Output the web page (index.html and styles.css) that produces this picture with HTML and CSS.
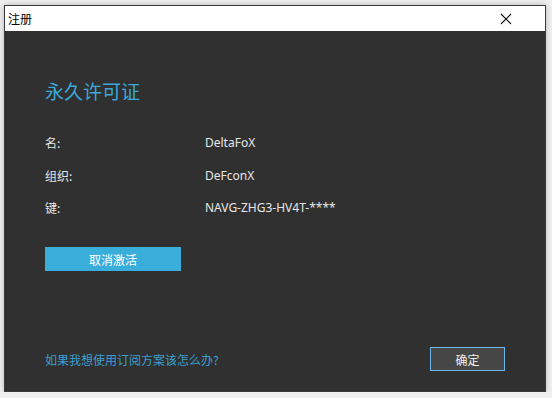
FILE: index.html
```html
<!DOCTYPE html>
<html lang="zh-CN">
<head>
  <meta charset="UTF-8">
  <title>注册</title>
  <link rel="stylesheet" href="styles.css">
</head>
<body>
  <div class="window">
    <div class="titlebar">
      <span class="title">注册</span>
      <button class="close" aria-label="关闭">
        <svg width="12" height="12" viewBox="0 0 12 12"><path d="M1 1L11 11M11 1L1 11" stroke="#111" stroke-width="1.1" fill="none"/></svg>
      </button>
    </div>
    <div class="content">
      <h1 class="heading">永久许可证</h1>
      <div class="info">
        <span class="label">名:</span><span class="value">DeltaFoX</span>
        <span class="label">组织:</span><span class="value">DeFconX</span>
        <span class="label">键:</span><span class="value">NAVG-ZHG3-HV4T-****</span>
      </div>
      <button class="deactivate">取消激活</button>
      <div class="footer">
        <a class="help" href="#">如果我想使用订阅方案该怎么办?</a>
        <button class="ok">确定</button>
      </div>
    </div>
  </div>
</body>
</html>
```

FILE: styles.css
```css
body {
  margin: 0;
  background-color: #f0f0f0;
  font-family: "Segoe UI", "Noto Sans", "Noto Sans CJK SC", sans-serif;
  font-size: 12px;
}

.window {
  width: 540px;
  height: 385px;
  margin: 5px 0 0 4px;
  border: 1px solid #3a3a3a;
  background-color: #303030;
  box-shadow: 0 0 6px rgba(0, 0, 0, 0.25);
  display: flex;
  flex-direction: column;
}

.titlebar {
  height: 25px;
  background-color: #fff;
  display: flex;
  align-items: center;
  justify-content: space-between;
}

.title {
  padding-left: 3px;
  color: #000;
  font-family: "Noto Sans CJK SC", sans-serif;
  font-size: 12px;
}

.close {
  width: 40px;
  height: 25px;
  margin-right: 19px;
  border: none;
  background: none;
  padding: 0;
  display: flex;
  align-items: center;
  justify-content: center;
}

.content {
  flex: 1;
  padding: 0 40px 20px 40px;
  display: flex;
  flex-direction: column;
}

.heading {
  margin: 47px 0 0 0;
  color: #3ba7d9;
  font-family: "Noto Sans CJK SC", sans-serif;
  font-weight: 400;
  font-size: 19px;
  line-height: 26px;
}

.info {
  margin-top: 30px;
  display: grid;
  grid-template-columns: 160px auto;
  row-gap: 15.5px;
  color: #e6e6e6;
  line-height: 17px;
}

.label {
  font-family: "Noto Sans CJK SC", sans-serif;
}

.deactivate {
  margin-top: 31px;
  width: 136px;
  height: 24px;
  border: none;
  background-color: #3aaedb;
  color: #fff;
  font-family: "Noto Sans CJK SC", sans-serif;
  font-size: 12px;
  padding: 0;
}

.footer {
  margin-top: auto;
  display: flex;
  align-items: center;
  justify-content: space-between;
}

.help {
  color: #3a9fd2;
  text-decoration: none;
  font-family: "Noto Sans CJK SC", sans-serif;
}

.ok {
  width: 75px;
  height: 24px;
  border: 1px solid #6cb6ea;
  background-color: #464646;
  color: #f0f0f0;
  font-family: "Noto Sans CJK SC", sans-serif;
  font-size: 12px;
  padding: 0;
}
```
